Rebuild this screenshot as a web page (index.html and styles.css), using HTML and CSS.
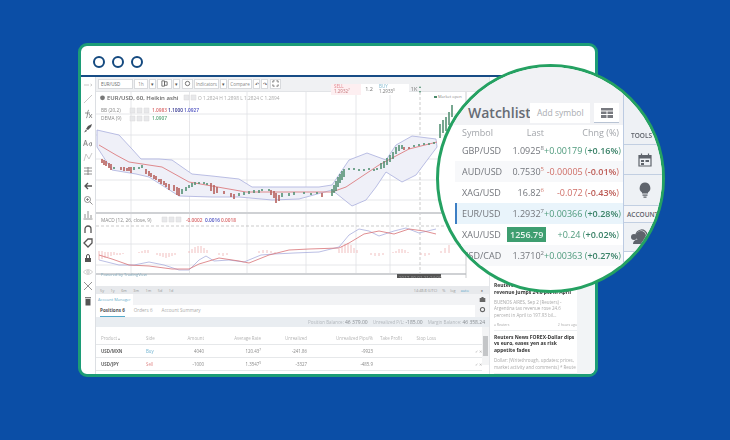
FILE: index.html
```html
<!doctype html>
<html lang="en">
  <head>
    <meta charset="UTF-8" />
    <title>Watchlist</title>
    <link rel="stylesheet" href="styles.css">
  </head>
  <body>
    <div class="window">
      <div class="win-head">
        <span class="dot"></span>
        <span class="dot"></span>
        <span class="dot"></span>
      </div>

      <div class="win-body">
        <!-- drawing tools -->
        <div class="tools">
          <svg viewBox="0 0 10 10" class="faint"><path d="M1 5h5M7.5 4l1.5 1-1.500 1"/></svg>
          <svg viewBox="0 0 10 10" class="faint"><path d="M1 9L9 1"/></svg>
          <svg viewBox="0 0 10 10"><path d="M6 1C4 1 5 9 3 9M2 4h5M6 5l3 4M9 5L6 9"/></svg>
          <svg viewBox="0 0 10 10" class="solid"><path d="M9 1L5 3 3 6l2 1 3-3zM3 6.500L1 9.500l3-1.500z"/></svg>
          <svg viewBox="0 0 10 10"><path d="M.5 8L2.500 2 4.500 8M1.200 6h2.600M8.500 5a1.500 1.500 0 1 0 0 2.500V4.500"/></svg>
          <svg viewBox="0 0 10 10" class="faint"><path d="M1 9L3 2 6 7 9 1"/></svg>
          <svg viewBox="0 0 10 10"><path d="M1 2h8M1 5h8M1 8h8M5 1v8"/></svg>
          <svg viewBox="0 0 10 10" class="bold"><path d="M9 5H2M5 2L2 5l3 3"/></svg>
          <svg viewBox="0 0 10 10"><circle cx="4.500" cy="4.500" r="3"/><path d="M7 7l2.500 2.500M3 4.500h3M4.500 3v3"/></svg>
          <svg viewBox="0 0 10 10"><path d="M.5 9h9M2 8V4M5 8V1M8 8V5"/></svg>
          <svg viewBox="0 0 10 10" class="bold"><path d="M2 9V5a3 3 0 0 1 6 0v4"/></svg>
          <svg viewBox="0 0 10 10" class="faint bold"><path d="M1 5l4-4h4v4l-4 4z"/></svg>
          <svg viewBox="0 0 10 10" class="solid"><path d="M2 5h6v4H2z"/><path class="open" d="M3.500 5V3a1.500 1.500 0 0 1 3 0v2"/></svg>
          <svg viewBox="0 0 10 10" class="faint"><path d="M.5 5C3 2 7 2 9.500 5 7 8 3 8 .5 5z"/><circle cx="5" cy="5" r="1.300"/></svg>
          <svg viewBox="0 0 10 10"><path d="M1 1l8 8M9 1L1 9"/></svg>
          <svg viewBox="0 0 10 10" class="solid"><path d="M2.500 3h5v6.500h-5zM2 1.200h6v1H2z"/></svg>
        </div>

        <div class="center">
          <div class="chart-bar">
            <span class="fld w-sym">EUR/USD</span>
            <span class="fld w-int">1h</span><span class="fld w-dd">&#9662;</span>
            <span class="fld w-int2"><svg viewBox="0 0 8 8" class="fld-ico"><path d="M1 1h3v6H1zM4 2h3v4H4z"/></svg></span><span class="fld w-dd">&#9662;</span>
            <span class="fld w-dd2"><svg viewBox="0 0 8 8" class="fld-ico"><circle cx="4" cy="4" r="2.500"/></svg></span>
            <span class="fld w-ind">Indicators</span><span class="fld w-dd">&#9662;</span>
            <span class="fld w-cmp">Compare</span>
            <span class="fld w-dd">&#8630;</span><span class="fld w-dd">&#8631;</span>
            <span class="fld w-dd2"><svg viewBox="0 0 8 8" class="fld-ico"><path d="M1 3V1h2M5 1h2v2M7 5v2H5M3 7H1V5"/></svg></span>
          </div>

          <div class="chart">
            <svg class="plot" viewBox="97 95 393 186">
              <!-- grid -->
              <path class="grid" d="M132 95V277M190.500 95V277M248 95V277M307 95V277M357 95V277M391 95V277M97 117H467M97 138H467M97 162H467M97 183H467M97 203H467M97 247H467M97 268H467"/>
              <path class="cross" d="M421 95V277M97 229H467"/>
              <path class="sep" d="M97 216H467M97 277H467"/>
              <path class="edge" d="M467 95V281"/>

              <!-- bollinger -->
              <path class="band" d="M98 133L120 138 133 152 142 162 160 162 173 163 193 177 213 179 240 182 253 190 273 190 297 190 320 190 333 188 350 163 368 156 387 163 397 148 413 139 437 142 L438 150 417 178 403 185 387 175 377 190 367 203 353 209 333 193 300 202 273 203 240 200 213 200 180 199 150 180 137 177 113 173 98 150Z"/>
              <path class="mid" d="M100 148L117 158 130 165 163 170 190 185 247 195 320 195 333 195 347 190 380 168 410 152 438 145"/>

              <!-- heikin ashi -->
              <path class="down" d="M103 162v4M105 163v5M107 164v5M110 166v5M112 167v6M122 170v3M125 170v4M128 171v3M130 170v4M132 170v6M147 172v5M150 174v5M152 176v4M155 178v4M157 179v4M160 182v3M162 182v5M165 184v4M167 186v4M170 187v6M175 188v6M178 190v8M180 191v8M212 186v8M215 188v9M218 190v6M225 194v3M232 196v4M235 197v5M272 193v5M275 194v7M277 196v10M280 198v6M323 196v4M405 150v3M410 150v2"/>
              <path class="up" d="M115 170v2M135 170v3M140 170v2M143 168v3M183 192v5M187 190v4M190 188v3M193 186v4M196 185v3M200 185v2M205 185v2M208 186v2M240 196v3M245 195v3M250 194v3M255 193v3M260 193v3M263 192v2M270 192v2M283 196v4M290 196v3M295 195v3M305 195v2M312 196v2M318 195v2M333 192v7M335 188v8M337 184v10M339 180v10M341 177v9M343 174v9M345 172v8M350 171v2M355 171v2M360 172v2M365 172v2M370 171v2M375 172v2M378 171v2M382 166v6M385 164v7M388 161v7M391 158v7M394 155v7M397 150v7M400 148v6M403 148v4M415 148v2M420 147v2M425 146v2M430 146v2M435 145v2M441 127v14M444 123v13M447 120v14M450 115v13M453 108v12"/>

              <!-- macd -->
              <path class="hist" d="M100 254v9M103 254v8M106 255v6M109 255v5M112 255v4M115 255v3M118 256v2M121 256v2M124 256v1M140 255v1M143 254v2M146 253v3M149 253v3M158 256v2M161 256v3M164 256v4M167 256v5M170 256v4M173 256v3M176 256v2M190 254v2M193 252v4M196 250v6M199 249v7M202 249v7M205 251v5M208 253v3M220 256v2M224 256v3M228 256v2M260 254v2M264 253v3M268 253v3M272 254v2M276 255v1M340 252v4M343 249v7M346 247v9M349 246v10M352 248v8M355 251v5M358 253v3M372 256v2M376 256v3M380 256v3M384 256v2M394 255v1M397 254v2M400 252v4M403 252v4M406 253v3M409 255v1M422 256v2M426 256v3M430 256v2M442 254v2M446 251v5M450 248v8"/>
              <path class="macd-b" d="M100 263L120 268 135 268 150 265 165 268 180 273 190 273 200 263 207 259 215 264 230 263 245 265 262 258 275 257 295 256 320 255 340 250 350 238 360 232 370 234 380 239 395 234 407 231 420 236 437 232"/>
              <path class="macd-r" d="M100 258L113 262 130 268 150 269 173 272 190 272 200 267 220 261 240 264 250 266 270 258 290 253 310 252 340 251 350 246 365 237 380 234 395 237 410 232 425 234 437 237"/>

              <!-- legend -->
              <circle class="globe" cx="103.500" cy="100.800" r="2.400"/>
              <text class="lg-main" x="108" y="103">EUR/USD, 60, Heikin ashi</text>
              <path class="lg-box" d="M185 98h5v5h-5zM192 98h5v5h-5z"/>
              <text class="lg-ohlc" x="199" y="103">O 1.2824 H 1.2898 L 1.2824 C 1.2894</text>
              <text class="lg-sub" x="102" y="115">BB (20,2)</text>
              <path class="lg-box" d="M131 111h5v5h-5zM138 111h5v5h-5zM145 111h5v5h-5z"/>
              <text class="lg-val c-red" x="153" y="115">1.0983</text>
              <text class="lg-val c-navy" x="169" y="115">1.1000</text>
              <text class="lg-val c-blue" x="185" y="115">1.0927</text>
              <text class="lg-sub" x="102" y="123">DEMA (9)</text>
              <path class="lg-box" d="M131 119h5v5h-5zM138 119h5v5h-5zM145 119h5v5h-5z"/>
              <text class="lg-val c-green" x="153" y="123">1.0907</text>
              <text class="lg-sub" x="102" y="225">MACD (12, 26, close, 9)</text>
              <path class="lg-box" d="M163 220h5v5h-5zM170 220h5v5h-5zM177 220h5v5h-5z"/>
              <text class="lg-val c-red" x="187" y="225">-0.0002</text>
              <text class="lg-val c-blue" x="206" y="225">0.0016</text>
              <text class="lg-val c-red" x="222" y="225">0.0018</text>
              <text class="lg-note" x="102" y="279">Powered by TradingView</text>

              <!-- time axis -->
              <text class="tick" x="131" y="285">8</text>
              <text class="tick" x="190" y="285">10</text>
              <text class="tick" x="248" y="285">9</text>
              <text class="tick" x="307" y="285">12</text>
              <text class="tick" x="357" y="285">14</text>
              <text class="tick" x="379" y="285">16:00</text>
              <text class="tick" x="465" y="285">8</text>
              <rect class="stamp" x="398" y="277" width="44" height="8"/>
              <text class="stamp-txt" x="400" y="283">2017-09-01 21:24:00</text>
            </svg>

            <!-- quick order ticket on top of the chart -->
            <div class="ticket">
              <div class="tk-sell"><b>SELL</b>1.2932<sup>7</sup></div>
              <div class="tk-qty">1.2</div>
              <div class="tk-buy"><b>BUY</b>1.2933<sup>0</sup></div>
              <div class="tk-size">1K</div>
              <div class="tk-step">&#9652;<br>&#9662;</div>
            </div>
            <div class="market"><i></i>Market open</div>
          </div>

          <div class="range-bar">
            <div class="ranges">
              <span>5y</span><span>1y</span><span>6m</span><span>3m</span><span>1m</span><span>5d</span><span>1d</span>
            </div>
            <div class="range-right">
              <span>14:48:8 (UTC)</span><span>%</span><span>log</span><span class="c-auto">auto</span><span class="gear">&#9679;</span>
            </div>
          </div>

          <div class="account">
            <div class="acc-main">
              <div class="acc-tabs"><span class="acc-tab">Account Manager</span></div>
              <div class="sub-tabs">
                <span class="sub-tab on">Positions 6</span>
                <span class="sub-tab">Orders 6</span>
                <span class="sub-tab">Account Summary</span>
              </div>
            </div>
            <div class="acc-ico">
              <svg viewBox="0 0 10 10" class="ai"><path d="M1 3h2l1-1.500h2L7 3h2v5.500H1z"/></svg>
              <svg viewBox="0 0 10 10" class="ai2"><circle cx="5" cy="5" r="3"/></svg>
            </div>
          </div>

          <div class="balance">
            <span>Position Balance: <b>46 379.00</b></span>
            <span>Unrealized P/L: <b>-185.00</b></span>
            <span>Margin Balance: <b>46 358.24</b></span>
          </div>

          <div class="pos-wrap">
            <table class="pos">
              <tr>
                <th class="t-l">Product &#9652;</th><th class="t-l">Side</th><th>Amount</th><th>Average Rate</th><th>Unrealized</th><th>Unrealized Pips/%</th><th>Take Profit</th><th>Stop Loss</th><th></th>
              </tr>
              <tr>
                <td class="t-l sym">USD/MXN</td><td class="t-l c-buy">Buy</td><td>4040</td><td>120.43<sup>7</sup></td><td>-241.86</td><td>-9923</td><td></td><td></td><td class="act">&#10003; &#10005;</td>
              </tr>
              <tr>
                <td class="t-l sym">USD/JPY</td><td class="t-l c-sell">Sell</td><td>-1000</td><td>1.3547<sup>9</sup></td><td>-3327</td><td>-485.9</td><td></td><td></td><td class="act">&#10003; &#10005;</td>
              </tr>
            </table>
            <div class="scroll"><i></i></div>
          </div>
        </div>

        <!-- news column -->
        <div class="news">
          <div class="news-col">
            <div class="news-tag">News</div>
            <div class="story">
              <h4>Reuters News Argentina says tax revenue jumps 24.6 pct in April</h4>
              <p>BUENOS AIRES, Sep 2 (Reuters) - Argentina tax revenue rose 24.6 percent in April to 197.93 bil...</p>
              <div class="story-foot"><span>a Reuters</span><span>2 hours ago</span></div>
            </div>
            <div class="story">
              <h4>Reuters News FOREX-Dollar dips vs euro, eases yen as risk appetite fades</h4>
              <p>Dollar: (Writethrough, updates; prices, market activity and comments) * Reute</p>
            </div>
          </div>
          <div class="news-gutter"></div>
        </div>
      </div>
    </div>

    <!-- magnifier over the watchlist -->
    <div class="lens">
      <div class="lens-main">
        <div class="wl-head">
          <span class="wl-title">Watchlist</span>
          <span class="wl-add">Add symbol</span>
          <span class="wl-btn">
            <svg viewBox="0 0 12 10" class="wl-grid"><path d="M0 0h12v2.500H0zM0 3.500h5.500V6H0zM6.500 3.500H12V6H6.500zM0 7h5.500v3H0zM6.500 7H12v3H6.500z"/></svg>
          </span>
        </div>
        <div class="wl-cols">
          <span>Symbol</span><span class="r">Last</span><span class="r">Chng (%)</span>
        </div>
        <div class="wl-row">
          <span>GBP/USD</span><span class="r">1.0925<sup>8</sup></span><span class="r up-txt">+0.00179 (<b>+0.16%</b>)</span>
        </div>
        <div class="wl-row alt">
          <span>AUD/USD</span><span class="r">0.7530<sup class="red">5</sup></span><span class="r dn-txt">-0.00005 (<b>-0.01%</b>)</span>
        </div>
        <div class="wl-row">
          <span>XAG/USD</span><span class="r">16.82<sup class="red">6</sup></span><span class="r dn-txt">-0.072 (<b>-0.43%</b>)</span>
        </div>
        <div class="wl-row sel">
          <span>EUR/USD</span><span class="r">1.2932<sup>7</sup></span><span class="r up-txt">+0.00366 (<b>+0.28%</b>)</span>
        </div>
        <div class="wl-row">
          <span>XAU/USD</span><span class="r"><em class="flash">1256.79</em></span><span class="r up-txt">+0.24 (<b>+0.02%</b>)</span>
        </div>
        <div class="wl-row alt">
          <span>USD/CAD</span><span class="r">1.3710<sup>2</sup></span><span class="r up-txt">+0.00363 (<b>+0.27%</b>)</span>
        </div>
      </div>
      <div class="lens-side">
        <div class="side-cell side-top"><span>TOOLS</span></div>
        <div class="side-cell side-cal">
          <svg viewBox="0 0 14 14" class="side-ico"><path d="M1 2.500h12V13H1zM3.500 .5v3M10.500 .5v3" class="thin"/><path d="M1 3h12v2.500H1zM3 7h3v2H3zM7.500 7h3.500v2H7.500zM3 10h3v2H3z"/></svg>
        </div>
        <div class="side-cell side-bulb">
          <svg viewBox="0 0 14 16" class="side-ico bulb"><path d="M7 .5a5.500 5.500 0 0 0-3 10v1h6v-1a5.500 5.500 0 0 0-3-10zM4.500 12.500h5v1.200h-5zM5.500 14.500h3v1.200h-3z"/></svg>
        </div>
        <div class="side-cell side-acc"><span>ACCOUNT</span></div>
        <div class="side-cell side-head">
          <svg viewBox="0 0 20 16" class="side-ico head"><circle cx="10" cy="7" r="5"/><path d="M2 15c0-4 4-5 8-5s8 1 8 5z"/><circle cx="3" cy="8" r="3"/><path class="ring" d="M5 7a5.500 5.500 0 0 1 11-1"/></svg>
        </div>
      </div>
    </div>
  </body>
</html>
```

FILE: styles.css
```css
html, body {
  margin: 0;
  height: 100%;
}
body {
  position: relative;
  width: 730px;
  height: 440px;
  overflow: hidden;
  background: #0b4ea6;
  font-family: "Open Sans", "Liberation Sans", sans-serif;
  color: #666;
}

.window {
  box-sizing: border-box;
  width: 520px;
  height: 334px;
  margin: 43px 0 0 78px;
  background: white;
  border: 3px solid #1c9c76;
  border-radius: 9px;
  overflow: hidden;
  display: flex;
  flex-direction: column;
  filter: blur(0.35px);
}
.win-head {
  flex: none;
  height: 31px;
  display: flex;
  align-items: center;
  gap: 7px;
  padding: 3px 0 0 12px;
  box-sizing: border-box;
  border-bottom: 2px solid #174c85;
}
.dot {
  width: 8px;
  height: 8px;
  border: 2.500px solid #14497f;
  border-radius: 50%;
}
.win-body {
  flex: 1;
  display: flex;
  min-height: 0;
}

/* left tools */
.tools {
  flex: none;
  width: 15px;
  padding: 3px 0;
  margin-left: 0;
  box-sizing: border-box;
  border-right: 1px solid #dcdfe3;
  display: flex;
  flex-direction: column;
  align-items: center;
  gap: 4.400px;
}
.tools svg {
  width: 10px;
  height: 10px;
  flex: none;
  fill: none;
  stroke: #777;
  stroke-width: 0.8;
}
.tools .faint { stroke: #bbb; }
.tools .bold { stroke: #555; stroke-width: 1.300; }
.tools .solid { fill: #555; stroke: none; }
.tools .open { fill: none; stroke: #555; stroke-width: 1; }

/* chart column */
.center {
  width: 393px;
  flex: none;
  display: flex;
  flex-direction: column;
  min-width: 0;
}
.chart-bar {
  flex: none;
  height: 15px;
  box-sizing: border-box;
  display: flex;
  align-items: center;
  gap: 1px;
  padding: 0 0 1px 2px;
  background: #f0f1f3;
  border-bottom: 1px solid #e2e4e7;
  white-space: nowrap;
}
.fld {
  height: 10px;
  box-sizing: border-box;
  background: white;
  border: 1px solid #d8dadd;
  font-size: 4.500px;
  line-height: 8px;
  color: #888;
  padding: 0 2px;
  display: flex;
  align-items: center;
  justify-content: center;
  overflow: hidden;
}
.w-sym { width: 35px; justify-content: flex-start; color: #666; }
.w-int { width: 14px; }
.w-int2 { width: 15px; }
.w-dd { width: 7px; padding: 0; color: #555; }
.w-dd2 { width: 11px; padding: 0; margin-left: 1px; }
.w-ind { width: 25px; }
.w-cmp { width: 24px; }
.fld-ico {
  width: 7px;
  height: 7px;
  fill: none;
  stroke: #666;
  stroke-width: 1;
}

.chart {
  flex: none;
  position: relative;
  height: 186px;
}
.plot {
  display: block;
  width: 393px;
  height: 186px;
  font-family: "Open Sans", "Liberation Sans", sans-serif;
}
.plot path, .plot circle { fill: none; }
.grid { stroke: #dfe1e4; stroke-width: 0.8; }
.cross { stroke: #aaa; stroke-width: 0.6; stroke-dasharray: 3 2; }
.sep { stroke: #cfd1d4; stroke-width: 1.800; }
.edge { stroke: #b5b7ba; stroke-width: 0.7; }
.plot .band { fill: #eff0f8; stroke: #a9aedd; stroke-width: 0.8; }
.mid { stroke: #dd7d80; stroke-width: 0.9; }
.down { stroke: #b7605c; stroke-width: 1.600; }
.up { stroke: #4b8a6c; stroke-width: 1.500; }
.hist { stroke: #efb9b9; stroke-width: 0.9; }
.macd-b { stroke: #a9aedd; stroke-width: 0.8; }
.macd-r { stroke: #d87276; stroke-width: 0.8; }
.plot .globe { fill: #777; }
.plot .lg-box { fill: #e7e8ea; stroke: #d8d9db; stroke-width: 0.5; }
.lg-main { font-size: 6px; font-weight: 600; fill: #666; }
.lg-ohlc { font-size: 4.800px; fill: #aaa; }
.lg-sub { font-size: 4.800px; fill: #888; }
.lg-val { font-size: 4.800px; font-weight: 600; }
.lg-note { font-size: 4px; fill: #7fa9bd; }
.c-red { fill: #d9686a; }
.c-navy { fill: #33358f; }
.c-blue { fill: #4c50c0; }
.c-green { fill: #58a578; }
.tick { font-size: 4px; fill: #888; }
.stamp { fill: #555; }
.stamp-txt { font-size: 4.500px; fill: #999; }

.ticket {
  position: absolute;
  left: 235px;
  top: -8px;
  height: 11px;
  display: flex;
  align-items: stretch;
  font-size: 4.500px;
  color: #777;
}
.ticket sup { font-size: 3px; line-height: 0; }
.ticket b { display: block; font-weight: 400; line-height: 4.500px; }
.tk-sell {
  width: 30px;
  padding-left: 3px;
  box-sizing: border-box;
  line-height: 5px;
  background: #fdeff1;
  color: #c7787c;
}
.tk-sell b { color: #e28a90; }
.tk-qty {
  width: 16px;
  text-align: center;
  line-height: 11px;
  font-size: 5.500px;
  background: white;
}
.tk-buy {
  width: 32px;
  padding-left: 2px;
  box-sizing: border-box;
  line-height: 5px;
  background: white;
}
.tk-buy b { color: #7fb8cf; }
.tk-size {
  width: 10px;
  text-align: center;
  line-height: 11px;
  font-size: 5.500px;
}
.tk-step {
  width: 6px;
  font-size: 4px;
  line-height: 5px;
  color: #4a8d6c;
}
.market {
  position: absolute;
  left: 335px;
  top: 1px;
  height: 7px;
  padding: 0 3px;
  font-size: 4px;
  line-height: 7px;
  color: #888;
  background: white;
}
.market i {
  display: inline-block;
  width: 2.500px;
  height: 2.500px;
  margin-right: 1.500px;
  background: #4b8a6c;
}

.range-bar {
  flex: none;
  height: 8px;
  margin-top: 8px;
  padding: 0 0 0 4px;
  background: #e7e9ec;
  display: flex;
  justify-content: space-between;
  align-items: center;
  font-size: 3.800px;
  color: #999;
}
.ranges {
  display: flex;
  gap: 6.500px;
}
.range-right {
  display: flex;
  gap: 5px;
  padding-right: 6px;
}
.c-auto { color: #5aa7c9; }
.gear { margin-left: 7px; color: #888; }

.account {
  flex: none;
  height: 23px;
  display: flex;
}
.acc-main {
  flex: 1;
  min-width: 0;
}
.acc-tabs {
  height: 11px;
  background: #f2f3f5;
  display: flex;
}
.acc-tab {
  padding: 0 2px 0 2px;
  background: white;
  font-size: 4px;
  line-height: 11px;
  color: #6aaecb;
}
.sub-tabs {
  height: 12px;
  display: flex;
  gap: 9px;
  padding-left: 4px;
}
.sub-tab {
  font-size: 4.600px;
  line-height: 11px;
  color: #aaa;
  box-sizing: border-box;
  height: 12px;
}
.sub-tab.on {
  color: #555;
  font-weight: 700;
  border-bottom: 1px solid #55a9cb;
}
.acc-ico {
  flex: none;
  width: 14px;
  display: flex;
  flex-direction: column;
  align-items: center;
  gap: 3px;
  padding-top: 2px;
  background: #f2f3f5;
  box-sizing: border-box;
}
.ai { width: 7px; height: 7px; fill: #666; }
.ai2 { width: 7px; height: 7px; fill: none; stroke: #666; stroke-width: 1.500; }

.balance {
  flex: none;
  height: 10px;
  background: #e9edf1;
  display: flex;
  justify-content: flex-end;
  align-items: center;
  gap: 5px;
  padding-right: 4px;
  font-size: 4.500px;
  color: #b3b8bd;
}
.balance b { font-weight: 400; color: #878c91; font-size: 5px; }

.pos-wrap {
  flex: 1;
  display: flex;
  min-height: 0;
  padding-top: 5px;
}
.pos {
  flex: 1;
  border-collapse: collapse;
  table-layout: fixed;
  height: 38px;
  font-size: 4.400px;
  color: #888;
}
.pos th {
  font-weight: 400;
  color: #b5b5b5;
  text-align: right;
  height: 12px;
  border-bottom: 1px solid #e6e8ea;
  padding: 0;
  white-space: nowrap;
}
.pos td {
  text-align: right;
  padding: 0;
  height: 12px;
  border-bottom: 1px solid #e6e8ea;
  white-space: nowrap;
}
.pos sup { font-size: 3px; line-height: 0; }
.pos th:nth-child(1) { width: 50px; padding-left: 5px; box-sizing: border-box; }
.pos td:nth-child(1) { padding-left: 5px; }
.pos th:nth-child(2) { width: 30px; }
.pos th:nth-child(3) { width: 28px; }
.pos th:nth-child(4) { width: 57px; }
.pos th:nth-child(5) { width: 46px; }
.pos th:nth-child(6) { width: 66px; }
.pos th:nth-child(7) { width: 29px; }
.pos th:nth-child(8) { width: 34px; }
.pos .t-l { text-align: left; }
.pos .sym { font-weight: 700; color: #666; }
.c-buy { color: #6fb3d1; }
.c-sell { color: #e08a8a; }
.pos .act { color: #aaa; font-size: 3.500px; }
.scroll {
  flex: none;
  width: 7px;
  background: #f3f4f5;
  height: 38px;
  margin-top: -5px;
  padding-top: 9px;
  box-sizing: border-box;
}
.scroll i {
  display: block;
  width: 5px;
  height: 20px;
  margin: 0 1px;
  background: #c4c6c8;
}

/* news */
.news {
  flex: 1;
  display: flex;
  min-width: 0;
  border-left: 1px solid #e4e6e9;
}
.news-col {
  width: 87px;
  flex: none;
  padding: 197px 0 0 4px;
  box-sizing: border-box;
  overflow: hidden;
}
.news-gutter {
  flex: 1;
  background: #f2f4f6;
}
.news-tag {
  font-size: 4px;
  color: #aaa;
  height: 8px;
  line-height: 8px;
}
.story {
  border-bottom: 1px solid #eceef0;
  padding-bottom: 3px;
  margin-bottom: 3px;
}
.story h4 {
  margin: 0 0 4px;
  font-size: 5px;
  line-height: 6.500px;
  color: #333;
  font-weight: 700;
}
.story p {
  margin: 0;
  font-size: 4.500px;
  line-height: 6.300px;
  color: #aaa;
}
.story-foot {
  display: flex;
  justify-content: space-between;
  margin-top: 4px;
  font-size: 3.500px;
  color: #aaa;
}

/* magnifier */
.lens {
  position: absolute;
  left: 436px;
  top: 64px;
  width: 229px;
  height: 229px;
  box-sizing: border-box;
  border: 3px solid #25a162;
  border-radius: 50%;
  background: white;
  overflow: hidden;
  display: flex;
  filter: blur(0.25px);
}
.lens-main {
  width: 184px;
  flex: none;
}
.wl-head {
  height: 58px;
  box-sizing: border-box;
  background: #f1f2f5;
  display: flex;
  align-items: flex-end;
  padding: 0 5px 2px 29px;
}
.wl-title {
  font-size: 14px;
  font-weight: 600;
  line-height: 20px;
  color: #666b74;
  width: 62px;
  flex: none;
}
.wl-add {
  width: 60px;
  height: 20px;
  flex: none;
  box-sizing: border-box;
  padding-left: 7px;
  background: white;
  font-size: 8.500px;
  line-height: 20px;
  color: #a9acb1;
}
.wl-btn {
  width: 25px;
  height: 20px;
  flex: none;
  margin-left: 4px;
  box-sizing: border-box;
  background: white;
  border-bottom: 1px solid #b9c4d4;
  display: flex;
  align-items: center;
  justify-content: center;
}
.wl-grid {
  width: 12px;
  height: 10px;
  fill: #77797f;
}
.wl-cols, .wl-row {
  display: grid;
  grid-template-columns: 45px 37px 1fr;
  margin-left: 16px;
  padding: 0 4px 0 7px;
  font-size: 9px;
  white-space: nowrap;
  align-items: center;
}
.wl-cols {
  height: 15px;
  color: #a2a5aa;
}
.wl-row {
  height: 21px;
  color: #73767c;
  position: relative;
}
.wl-row .r, .wl-cols .r { text-align: right; }
.wl-row sup { font-size: 6px; line-height: 0; }
.wl-row sup.red { color: #d07a6f; }
.wl-row b { font-weight: 600; }
.alt { background: #f7f8fa; }
.sel {
  background: #e9f4fb;
  box-shadow: inset 2px 0 0 #3d7fc4;
}
.up-txt { color: #4e9a7c; }
.up-txt b { color: #3a8268; }
.dn-txt { color: #cf6f68; }
.dn-txt b { color: #bd5c56; }
.flash {
  font-style: normal;
  font-weight: 600;
  background: #3e9e70;
  color: #e8f3ed;
  padding: 1px 3px;
}
.lens-side {
  flex: 1;
  display: flex;
  flex-direction: column;
  border-left: 1px solid #bccbe2;
}
.side-cell {
  box-sizing: border-box;
  background: #eef1f5;
  border-bottom: 1px solid #c2cfe2;
  padding-left: 7px;
  width: 45px;
  font-size: 6.500px;
  font-weight: 600;
  color: #5c6068;
  display: flex;
  align-items: center;
  flex: none;
}
.side-top { height: 78px; align-items: flex-end; padding-bottom: 4px; }
.side-cal { height: 30px; }
.side-bulb { height: 31px; }
.side-acc { height: 17px; padding-left: 3px; background: #f4f5f8; }
.side-head { height: 29px; }
.side-ico {
  width: 14px;
  height: 14px;
  margin-left: 7px;
  fill: #5f646c;
}
.side-ico .thin { fill: none; stroke: #5f646c; stroke-width: 1.200; }
.bulb { height: 16px; width: 14px; }
.head { width: 20px; height: 16px; margin-left: 0; }
.head .ring { fill: none; stroke: #5f646c; stroke-width: 1.200; }
```
